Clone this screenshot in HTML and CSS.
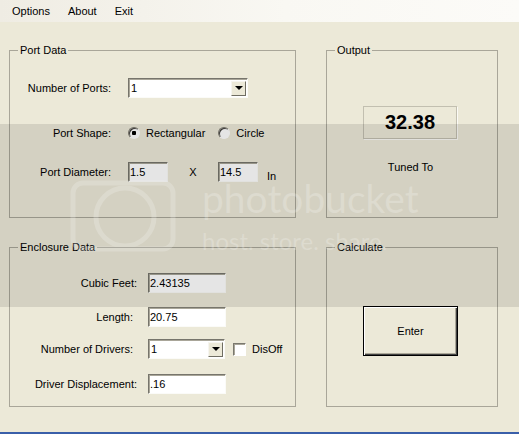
FILE: index.html
```html
<!DOCTYPE html>
<html lang="en">
<head>
  <meta charset="UTF-8">
  <title>Port Calculator</title>
  <link rel="stylesheet" href="styles.css">
</head>
<body>
  <div class="menubar">
    <span class="menu-item">Options</span>
    <span class="menu-item">About</span>
    <span class="menu-item">Exit</span>
  </div>

  <div class="form-area">
    <!-- Port Data -->
    <fieldset class="group">
      <legend>Port Data</legend>
      <div class="row port-row row-ports">
        <label class="field-label">Number of Ports:</label>
        <div class="combo combo-wide"><span class="combo-value">1</span><span class="combo-btn"></span></div>
      </div>
      <div class="row port-row row-shape">
        <label class="field-label">Port Shape:</label>
        <div class="inline">
          <input type="radio" name="shape" class="radio" checked>
          <span class="radio-text">Rectangular</span>
          <input type="radio" name="shape" class="radio radio-second">
          <span class="radio-text">Circle</span>
        </div>
      </div>
      <div class="row port-row row-diameter">
        <label class="field-label">Port Diameter:</label>
        <div class="inline">
          <input type="text" class="textbox small-box" value="1.5">
          <span class="times">X</span>
          <input type="text" class="textbox small-box" value="14.5">
          <span class="unit">In</span>
        </div>
      </div>
    </fieldset>

    <!-- Output -->
    <fieldset class="group">
      <legend>Output</legend>
      <div class="tuned-value">32.38</div>
      <div class="tuned-label">Tuned To</div>
    </fieldset>

    <!-- Enclosure Data -->
    <fieldset class="group">
      <legend>Enclosure Data</legend>
      <div class="row encl-row row-cubic">
        <label class="field-label">Cubic Feet:</label>
        <input type="text" class="textbox encl-box" value="2.43135" readonly>
      </div>
      <div class="row encl-row row-length">
        <label class="field-label short">Length:</label>
        <input type="text" class="textbox encl-box" value="20.75">
      </div>
      <div class="row encl-row row-drivers">
        <label class="field-label short">Number of Drivers:</label>
        <div class="inline">
          <div class="combo combo-narrow"><span class="combo-value">1</span><span class="combo-btn"></span></div>
          <input type="checkbox" class="checkbox">
          <span class="check-text">DisOff</span>
        </div>
      </div>
      <div class="row encl-row row-disp">
        <label class="field-label">Driver Displacement:</label>
        <input type="text" class="textbox encl-box" value=".16">
      </div>
    </fieldset>

    <!-- Calculate -->
    <fieldset class="group">
      <legend>Calculate</legend>
      <button class="enter-btn">Enter</button>
    </fieldset>
  </div>

  <div class="frame-edge"></div>

  <div class="watermark">
    <svg class="wm-camera" width="110" height="74" viewBox="0 0 110 74">
      <rect x="3" y="3" width="100" height="66" rx="10" fill="none" stroke="#fff" stroke-width="5"/>
      <circle cx="55" cy="37" r="29" fill="none" stroke="#fff" stroke-width="5"/>
    </svg>
    <span class="wm-name">photobucket</span>
    <span class="wm-tag">host. store. share.</span>
  </div>
</body>
</html>
```

FILE: styles.css
```css
* {
  box-sizing: border-box;
}

body {
  margin: 0;
  width: 519px;
  height: 434px;
  position: relative;
  overflow: hidden;
  display: flex;
  flex-direction: column;
  background: #ece9d8;
  font-family: "Liberation Sans", Arial, sans-serif;
  font-size: 11px;
  color: #000;
}

/* menu */
.menubar {
  height: 22px;
  display: flex;
  align-items: center;
  gap: 18px;
  padding-left: 12px;
  background: linear-gradient(to right, #efece3, #f9f8f3 55%, #fcfbf8);
}

/* groups */
.form-area {
  flex: 1;
  display: grid;
  grid-template-columns: 287px 172px;
  grid-template-rows: 174px 166px;
  column-gap: 30px;
  row-gap: 23px;
  padding: 22px 0 0 9px;
}

.group {
  margin: 0;
  padding: 0;
  min-width: 0;
  border: 1px solid #a9a699;
}

.group legend {
  margin-left: 8px;
  padding: 0 2px;
  line-height: 13px;
}

.row {
  display: grid;
  align-items: center;
  height: 20px;
}

.port-row {
  grid-template-columns: 101px auto;
  column-gap: 17px;
}

.encl-row {
  grid-template-columns: 127px auto;
  column-gap: 11px;
}

.row-ports { margin-top: 21px; }
.row-shape { margin-top: 25px; }
.row-diameter { margin-top: 19px; }

.row-cubic { margin-top: 19px; }
.row-length { margin-top: 14px; }
.row-drivers { margin-top: 12px; }
.row-disp { margin-top: 15px; }

.field-label {
  text-align: right;
  white-space: nowrap;
}

.field-label.short {
  padding-right: 4px;
}

.inline {
  display: flex;
  align-items: center;
  height: 20px;
}

/* controls */
.textbox,
.combo {
  height: 20px;
  padding: 0 1px;
  border: 1px solid;
  border-color: #77756c #fbfbf8 #fbfbf8 #77756c;
  box-shadow: inset 1px 1px 0 #a9a699;
  background: #fff;
  font: inherit;
  color: #000;
  outline: none;
}

.small-box { width: 40px; }
.encl-box { width: 78px; }

.combo {
  display: flex;
  align-items: center;
  justify-content: space-between;
  padding: 0 1px 0 2px;
}

.combo-wide { width: 120px; }
.combo-narrow { width: 77px; }

.combo-btn {
  width: 15px;
  height: 15px;
  display: flex;
  align-items: center;
  justify-content: center;
  border: 1px solid;
  border-color: #f6f5f0 #6f6d62 #6f6d62 #f6f5f0;
  background: #ece9d8;
}

.combo-btn::after {
  content: "";
  border-left: 4px solid transparent;
  border-right: 4px solid transparent;
  border-top: 4px solid #000;
}

.radio,
.checkbox {
  appearance: none;
  margin: 0;
  width: 12px;
  height: 12px;
  border: 1px solid;
  border-color: #7a786e #fff #fff #7a786e;
  box-shadow: inset 1px 1px 0 #3f3e3a;
  background: #fff;
}

.radio {
  border-radius: 50%;
}

.radio:checked {
  background: radial-gradient(circle, #000 0 2px, #fff 2.5px);
}

.radio-text {
  margin-left: 6px;
}

.radio-second {
  margin-left: 13px;
}

.times {
  width: 50px;
  text-align: center;
}

.unit {
  margin-left: 9px;
  padding-top: 8px;
}

.checkbox {
  width: 13px;
  height: 13px;
  margin-left: 8px;
  box-shadow: inset 1px 1px 0 #a9a699;
}

.check-text {
  margin-left: 6px;
}

/* output */
.tuned-value {
  width: 94px;
  height: 33px;
  margin: 49px 0 0 36px;
  display: flex;
  align-items: center;
  justify-content: center;
  border: 1px solid #c2bfb0;
  box-shadow: 1px 1px 0 #fbfaf5;
  font-size: 20px;
  font-weight: bold;
}

.tuned-label {
  margin-top: 22px;
  padding-right: 3px;
  line-height: 13px;
  text-align: center;
}

.enter-btn {
  width: 95px;
  height: 50px;
  margin: 52px 0 0 36px;
  border: 1px solid #000;
  background: #ece9d8;
  box-shadow: inset 1px 1px 0 #fff, inset -1px -1px 0 #404040, inset -2px -2px 0 #aca899;
  font: inherit;
  color: #000;
}

.frame-edge {
  height: 2px;
  background: #3a5fa9;
}

/* hosting watermark across the middle */
.watermark {
  position: absolute;
  left: 0;
  right: 0;
  top: 124px;
  height: 183px;
  background: rgba(0, 0, 0, 0.1);
  pointer-events: none;
}

.wm-camera {
  position: absolute;
  left: 70px;
  top: 56px;
  opacity: 0.2;
}

.wm-name,
.wm-tag {
  position: absolute;
  left: 202px;
  font-family: Lato, "Open Sans", sans-serif;
  color: rgba(255, 255, 255, 0.22);
  white-space: nowrap;
}

.wm-name {
  top: 54px;
  font-size: 39px;
  line-height: 40px;
}

.wm-tag {
  top: 104px;
  font-size: 24px;
  line-height: 26px;
}
```
